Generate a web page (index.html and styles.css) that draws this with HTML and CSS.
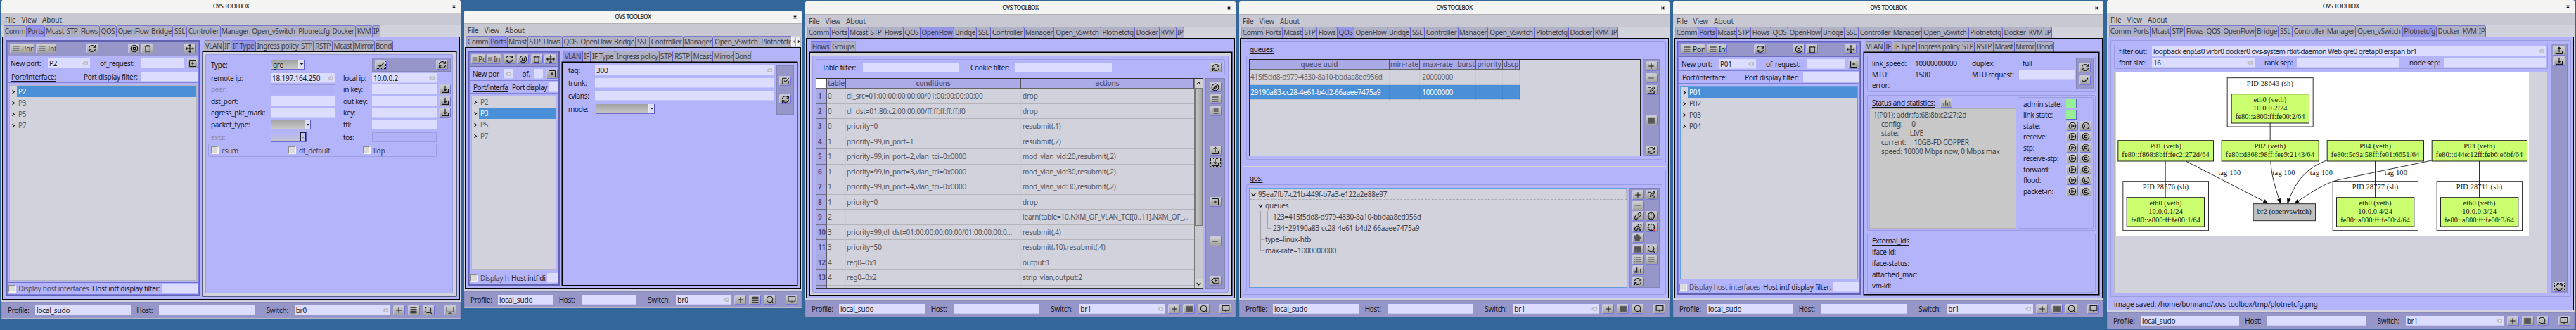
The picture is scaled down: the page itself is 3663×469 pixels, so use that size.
FILE: index.html
```html
<!DOCTYPE html>
<html lang="en">
<head>
<meta charset="utf-8">
<title>OVS TOOLBOX</title>
<link rel="stylesheet" href="styles.css">
</head>
<body>
<svg class="defs" aria-hidden="true">
  <symbol id="refresh" viewBox="0 0 16 16"><path d="M2 7A6 5.4 0 0 1 13 4.6M14 9A6 5.4 0 0 1 3 11.4M14 1.5V5.6H10M2 14.5V10.4H6"/></symbol>
  <symbol id="stop" viewBox="0 0 16 16"><circle cx="8" cy="8" r="6.3"/><rect x="5.9" y="5.9" width="4.2" height="4.2"/></symbol>
  <symbol id="play" viewBox="0 0 16 16"><circle cx="8" cy="8" r="6.3"/><path d="M6.5 5.3L10.7 8L6.5 10.7Z"/></symbol>
  <symbol id="trash" viewBox="0 0 16 16"><path d="M2 4H14M5.5 4V2H10.5V4M3.7 4V14.3H12.3V4"/></symbol>
  <symbol id="move" viewBox="0 0 16 16"><path d="M8 1V15M1 8H15M6 3L8 1L10 3M6 13L8 15L10 13M3 6L1 8L3 10M13 6L15 8L13 10"/></symbol>
  <symbol id="boxplus" viewBox="0 0 16 16"><rect x="2" y="2" width="12" height="12" rx="1"/><path d="M8 5V11M5 8H11"/></symbol>
  <symbol id="plus" viewBox="0 0 16 16"><path d="M8 3V13M3 8H13"/></symbol>
  <symbol id="minus" viewBox="0 0 16 16"><path d="M3 8H13"/></symbol>
  <symbol id="lines" viewBox="0 0 16 16"><path d="M2 4H14M2 8H14M2 12H14"/></symbol>
  <symbol id="lines4" viewBox="0 0 16 16"><path d="M2 3H14M2 6.4H14M2 9.7H14M2 13H14"/></symbol>
  <symbol id="solid" viewBox="0 0 16 16"><path d="M2 3H14V13.5H2Z" fill="#555" stroke="#666"/></symbol>
  <symbol id="list" viewBox="0 0 16 16"><path d="M5 4H14M5 8H14M5 12H14M1.5 4H3M1.5 8H3M1.5 12H3"/></symbol>
  <symbol id="search" viewBox="0 0 16 16"><circle cx="7.5" cy="7.2" r="5.6"/><path d="M11.5 11.2L14.5 14.5"/></symbol>
  <symbol id="screen" viewBox="0 0 16 16"><path d="M1.5 2H14.5V11H1.5ZM8 11V14M4.5 14H11.5"/></symbol>
  <symbol id="down" viewBox="0 0 16 16"><path d="M8 1V10M5 7.3L8 10.3L11 7.3M2 8V13.8H14V8"/></symbol>
  <symbol id="up" viewBox="0 0 16 16"><path d="M8 11V2M5 4.7L8 1.7L11 4.7M2 8V13.8H14V8"/></symbol>
  <symbol id="check" viewBox="0 0 16 16"><path d="M2.5 8.5L6 12L13.5 4"/></symbol>
  <symbol id="checkbox" viewBox="0 0 16 16"><path d="M13.5 8V14H2.5V3H10M5.5 7.5L8 10L14 2.5"/></symbol>
  <symbol id="edit" viewBox="0 0 16 16"><path d="M13.5 9V14.3H2V3H8M6 11L6.7 8L13 1.7L15 3.7L8.7 10.2Z"/></symbol>
  <symbol id="compass" viewBox="0 0 16 16"><circle cx="8" cy="8" r="6.5"/><path d="M11 5L9.5 9.2L5 11L6.6 6.7Z"/></symbol>
  <symbol id="erase" viewBox="0 0 16 16"><path d="M1 8L5.5 3H15V13H5.5ZM7.5 6L12 10M12 6L7.5 10"/></symbol>
  <symbol id="link" viewBox="0 0 16 16"><path d="M6.5 9.5A3 3 0 0 0 10.5 9.6L13.5 6.8A2.8 2.8 0 0 0 9.6 2.8L8 4.3M9.5 6.7A3 3 0 0 0 5.5 6.4L2.5 9.3A2.8 2.8 0 0 0 6.4 13.3L8 11.8"/></symbol>
  <symbol id="unlink" viewBox="0 0 16 16"><path d="M6.5 9.5A3 3 0 0 0 10.5 9.6L13.5 6.8A2.8 2.8 0 0 0 9.6 2.8L8 4.3M9.5 6.7A3 3 0 0 0 5.5 6.4L2.5 9.3A2.8 2.8 0 0 0 6.4 13.3L8 11.8M10.5 11L14.5 15M14.5 11L10.5 15"/></symbol>
  <symbol id="target" viewBox="0 0 16 16"><circle cx="8" cy="8" r="6.3"/><path d="M8 1.7V4.7M8 11.3V14.3M1.7 8H4.7M11.3 8H14.3"/></symbol>
  <symbol id="untarget" viewBox="0 0 16 16"><circle cx="8" cy="8" r="6.3"/><path d="M8 1.7V4.7M8 11.3V14.3M1.7 8H4.7M11.3 8H14.3"/><path d="M11 11L15 15M15 11L11 15" stroke="#e33"/></symbol>
  <symbol id="puzzle" viewBox="0 0 16 16"><path d="M2 4H6V2.5H8V4H11V7H14L13 10H11V13.5H3V10H1.5V7H3Z" fill="#555" stroke="#555"/></symbol>
  <symbol id="bars" viewBox="0 0 16 16"><path d="M2.8 13V9M6.3 13V3M9.8 13V8M13.2 13V5"/></symbol>
  <symbol id="clear" viewBox="0 0 16 12"><path d="M0 6L5 .5H16V11.5H5Z" fill="#bdbdc4" stroke="none"/><path d="M7 3.5L12 8.5M12 3.5L7 8.5" stroke="#eef" stroke-width="2"/></symbol>
  <symbol id="right" viewBox="0 0 8 8"><path d="M2 .8L6 4L2 7.2"/></symbol>
  <symbol id="open" viewBox="0 0 8 8"><path d="M.8 2.2L4 5.8L7.2 2.2"/></symbol>
  <symbol id="upc" viewBox="0 0 8 8"><path d="M.8 5.8L4 2.2L7.2 5.8"/></symbol>
  <symbol id="caret" viewBox="0 0 8 8"><path d="M1 2.5H7L4 6Z" fill="currentColor" stroke="none"/></symbol>
  <symbol id="close" viewBox="0 0 8 8"><path d="M1 1L7 7M7 1L1 7" stroke-width="2"/></symbol>
</svg>

<!-- Ports: tunnel interface -->
<section class="win w1">
  <header class="title">OVS TOOLBOX<svg><use href="#close"/></svg></header>
  <nav class="menu"><span>File</span><span>View</span><span>About</span></nav>
  <nav class="tabs main"><i>Comm</i><i class="on">Ports</i><i>Mcast</i><i>STP</i><i>Flows</i><i>QOS</i><i>OpenFlow</i><i>Bridge</i><i>SSL</i><i>Controller</i><i>Manager</i><i>Open_vSwitch</i><i>Plotnetcfg</i><i>Docker</i><i>KVM</i><i>IP</i></nav>
  <main class="frame split">
    <div class="ports">
      <div class="bar"><b class="btn port dim"><svg><use href="#lines"/></svg>Port</b><b class="btn int dim"><svg><use href="#lines"/></svg>Int</b><s></s><b class="btn"><svg><use href="#refresh"/></svg></b><s></s><b class="btn"><svg><use href="#stop"/></svg></b><b class="btn dim"><svg><use href="#trash"/></svg></b><s></s><b class="btn"><svg><use href="#move"/></svg></b></div>
      <div class="newport"><label>New port:</label><div class="in">P2<svg><use href="#clear"/></svg></div><label class="req">of_request:</label><div class="in"></div><b class="btn"><svg><use href="#boxplus"/></svg></b></div>
      <div class="filter"><label class="u">Port/interface:</label><label>Port display filter:</label><div class="in"></div></div>
      <div class="list"><p><svg><use href="#right"/></svg><span class="sel">P2</span></p><p><svg><use href="#right"/></svg><span>P3</span></p><p><svg><use href="#right"/></svg><span>P5</span></p><p><svg><use href="#right"/></svg><span>P7</span></p></div>
      <div class="foot"><em class="cb"></em><label class="soft">Display host interfaces</label><label>Host intf display filter:</label><div class="in"></div></div>
    </div>
    <div class="book">
      <nav class="tabs sub"><i>VLAN</i><i>IF</i><i class="on">IF Type</i><i>Ingress policy</i><i>STP</i><i>RSTP</i><i>Mcast</i><i>Mirror</i><i>Bond</i></nav>
      <div class="page gray"><div class="box iftype">
        <label>Type:</label><div class="combo c47">gre<q><svg><use href="#caret"/></svg></q></div><div class="bar apply"><b class="btn focus"><svg><use href="#check"/></svg></b><b class="btn"><svg><use href="#refresh"/></svg></b></div>
        <label>remote ip:</label><div class="in">18.197.164.250<svg><use href="#clear"/></svg></div><label class="l2">local ip:</label><div class="in">10.0.0.2<svg><use href="#clear"/></svg></div><span></span>
        <label class="off">peer:</label><div class="in off"></div><label class="l2">in key:</label><div class="in"></div><b class="btn"><svg><use href="#down"/></svg></b>
        <label>dst_port:</label><div class="in"></div><label class="l2">out key:</label><div class="in"></div><b class="btn"><svg><use href="#down"/></svg></b>
        <label>egress_pkt_mark:</label><div class="in"></div><label class="l2">key:</label><div class="in"></div><b class="btn"><svg><use href="#down"/></svg></b>
        <label>packet_type:</label><div class="combo c56"><span></span><q><svg><use href="#caret"/></svg></q></div><label class="l2">ttl:</label><div class="in"></div><span></span>
        <label class="off">exts:</label><div class="combo c50 faint"><span></span><q><svg><use href="#caret"/></svg></q></div><label class="l2">tos:</label><div class="in off"></div><span></span>
        <div class="checks"><em class="cb"></em><label>csum</label><em class="cb"></em><label>df_default</label><em class="cb"></em><label>lldp</label></div>
      </div></div>
    </div>
  </main>
  <footer class="status"><label>Profile:</label><div class="in">local_sudo</div><label class="host">Host:</label><div class="in"></div><label class="switch">Switch:</label><div class="in">br0<svg><use href="#clear"/></svg></div><b class="btn"><svg><use href="#plus"/></svg></b><b class="btn"><svg><use href="#lines4"/></svg></b><b class="btn"><svg><use href="#search"/></svg></b><b class="btn dim"><svg><use href="#screen"/></svg></b></footer>
</section>

<!-- Ports: VLAN, small window -->
<section class="win w2">
  <header class="title">OVS TOOLBOX<svg><use href="#close"/></svg></header>
  <nav class="menu"><span>File</span><span>View</span><span>About</span></nav>
  <div class="tabwrap"><nav class="tabs main"><i>Comm</i><i class="on">Ports</i><i>Mcast</i><i>STP</i><i>Flows</i><i>QOS</i><i>OpenFlow</i><i>Bridge</i><i>SSL</i><i>Controller</i><i>Manager</i><i>Open_vSwitch</i><i>Plotnetcfg</i></nav><div class="arrows"><q class="l"><svg><use href="#caret"/></svg></q><q class="r"><svg><use href="#caret"/></svg></q></div></div>
  <main class="frame split">
    <div class="ports">
      <div class="bar"><b class="btn port dim"><svg><use href="#lines"/></svg>Po</b><b class="btn int dim"><svg><use href="#lines"/></svg>In</b><s></s><b class="btn"><svg><use href="#refresh"/></svg></b><s></s><b class="btn"><svg><use href="#stop"/></svg></b><s></s><b class="btn"><svg><use href="#trash"/></svg></b><s></s><b class="btn"><svg><use href="#move"/></svg></b></div>
      <div class="newport"><label>New por</label><div class="in"><svg><use href="#clear"/></svg></div><label class="req">of.</label><div class="in"></div><b class="btn"><svg><use href="#boxplus"/></svg></b></div>
      <div class="filter"><label class="u">Port/interfa</label><label>Port display</label><div class="in"></div></div>
      <div class="list"><p><svg><use href="#right"/></svg><span>P2</span></p><p><svg><use href="#right"/></svg><span class="sel">P3</span></p><p><svg><use href="#right"/></svg><span>P5</span></p><p><svg><use href="#right"/></svg><span>P7</span></p></div>
      <div class="foot"><em class="cb"></em><label class="soft">Display h</label><label>Host intf di</label><div class="in"></div></div>
    </div>
    <div class="book">
      <nav class="tabs sub"><i class="on">VLAN</i><i>IF</i><i>IF Type</i><i>Ingress policy</i><i>STP</i><i>RSTP</i><i>Mcast</i><i>Mirror</i><i>Bond</i></nav>
      <div class="page vlan">
        <div class="vform"><label>tag:</label><div class="in">300<svg><use href="#clear"/></svg></div><label>trunk:</label><div class="in"></div><label>cvlans:</label><div class="in"></div><label>mode:</label><div class="combo c84"><span></span><q><svg><use href="#caret"/></svg></q></div></div>
        <div class="bar side"><b class="btn"><svg><use href="#checkbox"/></svg></b><b class="btn"><svg><use href="#refresh"/></svg></b></div>
      </div>
    </div>
  </main>
  <footer class="status"><label>Profile:</label><div class="in">local_sudo</div><label class="host">Host:</label><div class="in"></div><label class="switch">Switch:</label><div class="in">br0<svg><use href="#clear"/></svg></div><b class="btn"><svg><use href="#plus"/></svg></b><b class="btn"><svg><use href="#lines4"/></svg></b><b class="btn"><svg><use href="#search"/></svg></b><b class="btn dim"><svg><use href="#screen"/></svg></b></footer>
</section>

<!-- OpenFlow flows -->
<section class="win w3">
  <header class="title">OVS TOOLBOX<svg><use href="#close"/></svg></header>
  <nav class="menu"><span>File</span><span>View</span><span>About</span></nav>
  <nav class="tabs main"><i>Comm</i><i>Ports</i><i>Mcast</i><i>STP</i><i>Flows</i><i>QOS</i><i class="on">OpenFlow</i><i>Bridge</i><i>SSL</i><i>Controller</i><i>Manager</i><i>Open_vSwitch</i><i>Plotnetcfg</i><i>Docker</i><i>KVM</i><i>IP</i></nav>
  <main class="frame flowsframe">
    <nav class="tabs of"><i class="on">Flows</i><i>Groups</i></nav>
    <div class="page gray"><div class="box flows">
      <div class="box offilter"><label>Table filter:</label><div class="in"></div><label class="cookie">Cookie filter:</label><div class="in"></div><b class="btn"><svg><use href="#refresh"/></svg></b></div>
      <div class="flowbody">
        <div class="tablewrap">
          <div class="ftable">
            <div class="fr hd"><span class="corner"></span><span>table</span><span>conditions</span><span>actions</span></div>
            <div class="fr"><span>1</span><span>0</span><span>dl_src=01:00:00:00:00:00/01:00:00:00:00:00</span><span>drop</span></div>
            <div class="fr"><span>2</span><span>0</span><span>dl_dst=01:80:c2:00:00:00/ff:ff:ff:ff:ff:f0</span><span>drop</span></div>
            <div class="fr"><span>3</span><span>0</span><span>priority=0</span><span>resubmit(,1)</span></div>
            <div class="fr"><span>4</span><span>1</span><span>priority=99,in_port=1</span><span>resubmit(,2)</span></div>
            <div class="fr"><span>5</span><span>1</span><span>priority=99,in_port=2,vlan_tci=0x0000</span><span>mod_vlan_vid:20,resubmit(,2)</span></div>
            <div class="fr"><span>6</span><span>1</span><span>priority=99,in_port=3,vlan_tci=0x0000</span><span>mod_vlan_vid:30,resubmit(,2)</span></div>
            <div class="fr"><span>7</span><span>1</span><span>priority=99,in_port=4,vlan_tci=0x0000</span><span>mod_vlan_vid:30,resubmit(,2)</span></div>
            <div class="fr"><span>8</span><span>1</span><span>priority=0</span><span>drop</span></div>
            <div class="fr"><span>9</span><span>2</span><span></span><span>learn(table=10,NXM_OF_VLAN_TCI[0..11],NXM_OF_...</span></div>
            <div class="fr"><span>10</span><span>3</span><span>priority=99,dl_dst=01:00:00:00:00:00/01:00:00:00:0...</span><span>resubmit(,4)</span></div>
            <div class="fr"><span>11</span><span>3</span><span>priority=50</span><span>resubmit(,10),resubmit(,4)</span></div>
            <div class="fr"><span>12</span><span>4</span><span>reg0=0x1</span><span>output:1</span></div>
            <div class="fr"><span>13</span><span>4</span><span>reg0=0x2</span><span>strip_vlan,output:2</span></div>
            <div class="fr"><span></span><span></span><span></span><span></span></div>
          </div>
          <div class="scroll"><q><svg><use href="#upc"/></svg></q><div class="thumb"></div><q class="end"><svg><use href="#open"/></svg></q></div>
        </div>
        <div class="bar tools3"><b class="btn"><svg><use href="#compass"/></svg></b><b class="btn"><svg><use href="#lines"/></svg></b><b class="btn"><svg><use href="#list"/></svg></b><b class="btn g1"><svg><use href="#up"/></svg></b><b class="btn focus"><svg><use href="#down"/></svg></b><b class="btn g1"><svg><use href="#boxplus"/></svg></b><b class="btn g1"><svg><use href="#minus"/></svg></b><b class="btn g1"><svg><use href="#erase"/></svg></b></div>
      </div>
    </div></div>
  </main>
  <footer class="status"><label>Profile:</label><div class="in">local_sudo</div><label class="host">Host:</label><div class="in"></div><label class="switch">Switch:</label><div class="in">br1<svg><use href="#clear"/></svg></div><b class="btn"><svg><use href="#plus"/></svg></b><b class="btn"><svg><use href="#solid"/></svg></b><b class="btn"><svg><use href="#search"/></svg></b><b class="btn"><svg><use href="#screen"/></svg></b></footer>
</section>

<!-- QOS -->
<section class="win w4">
  <header class="title">OVS TOOLBOX<svg><use href="#close"/></svg></header>
  <nav class="menu"><span>File</span><span>View</span><span>About</span></nav>
  <nav class="tabs main"><i>Comm</i><i>Ports</i><i>Mcast</i><i>STP</i><i>Flows</i><i class="on">QOS</i><i>OpenFlow</i><i>Bridge</i><i>SSL</i><i>Controller</i><i>Manager</i><i>Open_vSwitch</i><i>Plotnetcfg</i><i>Docker</i><i>KVM</i><i>IP</i></nav>
  <main class="frame qosframe">
    <div class="box queues"><h4>queues:</h4><div class="box qin">
      <div class="qtable">
        <div class="qr hd"><span>queue uuid</span><span>min-rate</span><span>max-rate</span><span>burst</span><span>priority</span><span>dscp</span></div>
        <div class="qr"><span>415f5dd8-d979-4330-8a10-bbdaa8ed956d</span><span></span><span>20000000</span><span></span><span></span><span></span></div>
        <div class="qr selrow"><span>29190a83-cc28-4e61-b4d2-66aaee7475a9</span><span></span><span>10000000</span><span></span><span></span><span></span></div>
      </div>
      <div class="bar tools4"><b class="btn"><svg><use href="#plus"/></svg></b><b class="btn dim"><svg><use href="#minus"/></svg></b><b class="btn"><svg><use href="#edit"/></svg></b><b class="btn far"><svg><use href="#solid"/></svg></b><b class="btn far"><svg><use href="#refresh"/></svg></b></div>
    </div></div>
    <div class="rule"></div>
    <div class="box qos"><h4>qos:</h4><div class="box qin">
      <div class="tree">
        <p class="cur"><svg><use href="#open"/></svg>95ea7fb7-c21b-449f-b7a3-e122a2e88e97</p>
        <p class="t1"><svg><use href="#open"/></svg>queues</p>
        <div class="kids"><p class="t2">123=415f5dd8-d979-4330-8a10-bbdaa8ed956d</p><p class="t2 last">234=29190a83-cc28-4e61-b4d2-66aaee7475a9</p><p class="t3">type=linux-htb</p></div>
        <p class="t3 last">max-rate=1000000000</p>
      </div>
      <div class="bar tools5"><b class="btn"><svg><use href="#plus"/></svg></b><b class="btn"><svg><use href="#edit"/></svg></b><b class="btn dim"><svg><use href="#minus"/></svg></b><span></span><b class="btn"><svg><use href="#link"/></svg></b><b class="btn"><svg><use href="#target"/></svg></b><b class="btn"><svg><use href="#unlink"/></svg></b><b class="btn"><svg><use href="#untarget"/></svg></b><b class="btn"><svg><use href="#puzzle"/></svg></b><span></span><b class="btn"><svg><use href="#solid"/></svg></b><b class="btn"><svg><use href="#search"/></svg></b><b class="btn dim"><svg><use href="#list"/></svg></b><b class="btn dim"><svg><use href="#lines"/></svg></b><b class="btn"><svg><use href="#bars"/></svg></b><span></span><b class="btn"><svg><use href="#refresh"/></svg></b></div>
    </div></div>
  </main>
  <footer class="status"><label>Profile:</label><div class="in">local_sudo</div><label class="host">Host:</label><div class="in"></div><label class="switch">Switch:</label><div class="in">br1<svg><use href="#clear"/></svg></div><b class="btn"><svg><use href="#plus"/></svg></b><b class="btn"><svg><use href="#solid"/></svg></b><b class="btn"><svg><use href="#search"/></svg></b><b class="btn"><svg><use href="#screen"/></svg></b></footer>
</section>

<!-- Ports: interface status -->
<section class="win w5">
  <header class="title">OVS TOOLBOX<svg><use href="#close"/></svg></header>
  <nav class="menu"><span>File</span><span>View</span><span>About</span></nav>
  <nav class="tabs main"><i>Comm</i><i class="on">Ports</i><i>Mcast</i><i>STP</i><i>Flows</i><i>QOS</i><i>OpenFlow</i><i>Bridge</i><i>SSL</i><i>Controller</i><i>Manager</i><i>Open_vSwitch</i><i>Plotnetcfg</i><i>Docker</i><i>KVM</i><i>IP</i></nav>
  <main class="frame split">
    <div class="ports">
      <div class="bar"><b class="btn port"><svg><use href="#lines"/></svg>Port</b><b class="btn int"><svg><use href="#lines"/></svg>Int</b><s></s><b class="btn"><svg><use href="#refresh"/></svg></b><s></s><b class="btn"><svg><use href="#stop"/></svg></b><b class="btn"><svg><use href="#trash"/></svg></b><s></s><b class="btn"><svg><use href="#move"/></svg></b></div>
      <div class="newport"><label>New port:</label><div class="in">P01<svg><use href="#clear"/></svg></div><label class="req">of_request:</label><div class="in"></div><b class="btn"><svg><use href="#boxplus"/></svg></b></div>
      <div class="filter"><label class="u">Port/interface:</label><label>Port display filter:</label><div class="in"></div></div>
      <div class="list focused"><p><svg><use href="#right"/></svg><span class="sel">P01</span></p><p><svg><use href="#right"/></svg><span>P02</span></p><p><svg><use href="#right"/></svg><span>P03</span></p><p><svg><use href="#right"/></svg><span>P04</span></p></div>
      <div class="foot"><em class="cb"></em><label class="soft">Display host interfaces</label><label>Host intf display filter:</label><div class="in"></div></div>
    </div>
    <div class="book">
      <nav class="tabs sub"><i>VLAN</i><i class="on">IF</i><i>IF Type</i><i>Ingress policy</i><i>STP</i><i>RSTP</i><i>Mcast</i><i>Mirror</i><i>Bond</i></nav>
      <div class="page ifpage">
        <div class="box speed">
          <div class="sgrid"><label>link_speed:</label><label>10000000000</label><label>duplex:</label><label class="full">full</label><label>MTU:</label><label>1500</label><label>MTU request:</label><div class="in"></div><label>error:</label></div>
          <div class="bar side"><b class="btn"><svg><use href="#refresh"/></svg></b><b class="btn"><svg><use href="#check"/></svg></b></div>
        </div>
        <div class="box stats">
          <div class="statcol"><div class="stathead"><h4>Status and statistics:</h4><b class="btn dim"><svg><use href="#bars"/></svg></b></div>
<pre class="report">1(P01): addr:fa:68:8b:c2:27:2d
<span class="k">config:</span><span class="v1">0</span>
<span class="k">state:</span><span class="v2">LIVE</span>
<span class="k">current:</span><span class="v3">10GB-FD COPPER</span>
<span class="k">speed: 10000 Mbps now, 0 Mbps max</span></pre></div>
          <div class="box states">
            <label>admin state:</label><em class="led"></em><span></span>
            <label>link state:</label><em class="led"></em><span></span>
            <label>state:</label><b class="btn"><svg><use href="#play"/></svg></b><b class="btn"><svg><use href="#stop"/></svg></b>
            <label>receive:</label><b class="btn"><svg><use href="#play"/></svg></b><b class="btn"><svg><use href="#stop"/></svg></b>
            <label>stp:</label><b class="btn"><svg><use href="#play"/></svg></b><b class="btn"><svg><use href="#stop"/></svg></b>
            <label>receive-stp:</label><b class="btn"><svg><use href="#play"/></svg></b><b class="btn"><svg><use href="#stop"/></svg></b>
            <label>forward:</label><b class="btn"><svg><use href="#play"/></svg></b><b class="btn"><svg><use href="#stop"/></svg></b>
            <label>flood:</label><b class="btn"><svg><use href="#play"/></svg></b><b class="btn"><svg><use href="#stop"/></svg></b>
            <label>packet-in:</label><b class="btn"><svg><use href="#play"/></svg></b><b class="btn"><svg><use href="#stop"/></svg></b>
          </div>
        </div>
        <div class="box ids"><label class="u">External_ids</label><label>iface-id:</label><label>iface-status:</label><label>attached_mac:</label><label>vm-id:</label></div>
      </div>
    </div>
  </main>
  <footer class="status"><label>Profile:</label><div class="in">local_sudo</div><label class="host">Host:</label><div class="in"></div><label class="switch">Switch:</label><div class="in">br1<svg><use href="#clear"/></svg></div><b class="btn"><svg><use href="#plus"/></svg></b><b class="btn"><svg><use href="#solid"/></svg></b><b class="btn"><svg><use href="#search"/></svg></b><b class="btn"><svg><use href="#screen"/></svg></b></footer>
</section>

<!-- Plotnetcfg -->
<section class="win w6">
  <header class="title">OVS TOOLBOX<svg><use href="#close"/></svg></header>
  <nav class="menu"><span>File</span><span>View</span><span>About</span></nav>
  <nav class="tabs main"><i>Comm</i><i>Ports</i><i>Mcast</i><i>STP</i><i>Flows</i><i>QOS</i><i>OpenFlow</i><i>Bridge</i><i>SSL</i><i>Controller</i><i>Manager</i><i>Open_vSwitch</i><i class="on">Plotnetcfg</i><i>Docker</i><i>KVM</i><i>IP</i></nav>
  <main class="frame plotframe">
    <div class="box plot">
      <div class="plotcol">
        <div class="box pfilter">
          <div><label>filter out:</label><div class="in">loopback enp5s0 virbr0 docker0 ovs-system rtkit-daemon Web gre0 gretap0 erspan br1<svg><use href="#clear"/></svg></div></div>
          <div><label>font size:</label><div class="in">16<svg><use href="#clear"/></svg></div><label class="rank">rank sep:</label><div class="in"></div><label class="node">node sep:</label><div class="in"></div></div>
        </div>
        <div class="canvas">
          <svg class="graph" viewBox="58 308 1760 696">
            <g class="cluster"><rect x="532" y="331" width="366" height="208"/><rect x="87" y="772" width="365" height="210"/><rect x="982" y="772" width="364" height="210"/><rect x="1426" y="772" width="364" height="210"/></g>
            <g class="veth"><rect x="550" y="400" width="331" height="124"/><rect x="66" y="598" width="407" height="88"/><rect x="508" y="598" width="414" height="88"/><rect x="958" y="598" width="412" height="88"/><rect x="1405" y="598" width="406" height="88"/><rect x="103" y="841" width="331" height="124"/><rect x="998" y="841" width="331" height="124"/><rect x="1442" y="841" width="331" height="124"/></g>
            <rect class="bridge" x="643" y="868" width="265" height="72"/>
            <path class="edge" d="M715 524V598M268 686V841M1163 686V841M1607 686V841M355 686L690 858M717 686C720 750 738 800 753 850M958 682C870 715 825 770 796 850M1404 683L1010 765C960 775 900 812 832 858"/>
            <path class="tip" d="M706 867L685 862L692 850ZM760 867L746 850L759 846ZM789 867L788 846L802 850ZM820 867L830 850L838 861Z"/>
            <g class="gt">
              <text x="714" y="364" textLength="198">PID 28643 (sh)</text><text x="714" y="433" textLength="140">eth0 (veth)</text><text x="715" y="469" textLength="146">10.0.0.2/24</text><text x="715" y="505" textLength="296">fe80::a800:ff:fe00:2/64</text>
              <text x="269" y="631" textLength="134">P01 (veth)</text><text x="269" y="667" textLength="373">fe80::f868:8bff:fec2:272d/64</text>
              <text x="714" y="631" textLength="134">P02 (veth)</text><text x="714" y="667" textLength="378">fe80::d868:98ff:fee9:2143/64</text>
              <text x="1163" y="631" textLength="134">P04 (veth)</text><text x="1163" y="667" textLength="376">fe80::5c9a:58ff:fe01:6651/64</text>
              <text x="1607" y="631" textLength="134">P03 (veth)</text><text x="1607" y="667" textLength="370">fe80::d44e:12ff:feb6:e6bf/64</text>
              <text x="541" y="746" textLength="96">tag 100</text><text x="773" y="746" textLength="96">tag 100</text><text x="933" y="746" textLength="96">tag 100</text><text x="1251" y="746" textLength="96">tag 100</text>
              <text x="269" y="806" textLength="196">PID 28576 (sh)</text><text x="269" y="874" textLength="138">eth0 (veth)</text><text x="269" y="910" textLength="146">10.0.0.1/24</text><text x="269" y="946" textLength="296">fe80::a800:ff:fe00:1/64</text>
              <text x="1163" y="806" textLength="196">PID 28777 (sh)</text><text x="1163" y="874" textLength="138">eth0 (veth)</text><text x="1163" y="910" textLength="146">10.0.0.4/24</text><text x="1163" y="946" textLength="296">fe80::a800:ff:fe00:4/64</text>
              <text x="1607" y="806" textLength="196">PID 28711 (sh)</text><text x="1607" y="874" textLength="138">eth0 (veth)</text><text x="1607" y="910" textLength="146">10.0.0.3/24</text><text x="1607" y="946" textLength="296">fe80::a800:ff:fe00:3/64</text>
              <text x="775" y="910" textLength="231">br2 (openvswitch)</text>
            </g>
          </svg>
        </div>
      </div>
      <div class="bar tools6"><b class="btn"><svg><use href="#up"/></svg></b><b class="btn"><svg><use href="#down"/></svg></b><b class="btn focus low"><svg><use href="#refresh"/></svg></b></div>
    </div>
    <p class="saved">image saved: /home/bonnand/.ovs-toolbox/tmp/plotnetcfg.png</p>
  </main>
  <footer class="status"><label>Profile:</label><div class="in">local_sudo</div><label class="host">Host:</label><div class="in"></div><label class="switch">Switch:</label><div class="in">br1<svg><use href="#clear"/></svg></div><b class="btn"><svg><use href="#plus"/></svg></b><b class="btn"><svg><use href="#solid"/></svg></b><b class="btn"><svg><use href="#search"/></svg></b><b class="btn"><svg><use href="#screen"/></svg></b></footer>
</section>
</body>
</html>
```
FILE: styles.css
```css
* { box-sizing: border-box; }
html, body { margin: 0; width: 3663px; height: 469px; overflow: hidden; background: #336699; }
body { position: relative; font: 10px/14px "Noto Sans", "Open Sans", sans-serif; letter-spacing: -.3px; color: #17171c; white-space: nowrap; }
.defs { position: absolute; width: 0; height: 0; }
svg { fill: none; stroke: currentColor; stroke-width: 1.5; flex: none; }
p, h4, pre { margin: 0; }
i, em, b { font-style: normal; font-weight: normal; }
q { quotes: none; }
q::before, q::after { content: none; }
h4 { font-weight: normal; font-size: 10px; line-height: 14px; text-decoration: underline; text-underline-offset: 2px; }
.u { text-decoration: underline; text-underline-offset: 2px; }

/* windows on the desktop */
.win { position: absolute; display: flex; flex-direction: column; background: #d2d2dc; border-radius: 3px 3px 0 0; overflow: hidden; }
.w1 { left: 2px; top: 0; width: 653px; height: 453px; }
.w2 { left: 660px; top: 15px; width: 480px; height: 423px; }
.w3 { left: 1145px; top: 2px; width: 612px; height: 449px; }
.w4 { left: 1762px; top: 2px; width: 612px; height: 449px; }
.w5 { left: 2379px; top: 2px; width: 612px; height: 449px; }
.w6 { left: 2996px; top: 0; width: 665px; height: 468px; }

.title { height: 19px; flex: none; display: flex; align-items: center; justify-content: center; background: #f4f4f3; border-bottom: 1px solid #b2b2b6; font-size: 8px; line-height: 18px; position: relative; -webkit-text-stroke: .2px; }
.title svg { position: absolute; right: 7px; top: 7px; width: 5px; height: 5px; }
.menu { height: 17px; flex: none; display: flex; align-items: center; background: #c8c8d2; padding-left: 5px; color: #3c3c42; }
.menu span { margin-right: 8px; letter-spacing: -.1px; }

/* tab rows */
.tabs { display: flex; height: 16px; flex: none; }
.tabs i { flex: none; display: flex; justify-content: center; height: 16px; line-height: 15px; background: #b1b1c6; border-right: 1px solid #6464d2; border-top: 1px solid #7878c8; color: #3e3e48; letter-spacing: -.38px; }
.tabs i.on { background: #9696e6; border-top-color: #7878e6; }
.main { padding-left: 3px; }
.main i { border-radius: 0 3px 0 0; }
.main i:first-child { border-left: 1px solid #9a9ad6; width: 33px; }
.main i:nth-child(2) { width: 26px; }
.main i:nth-child(3), .main i:nth-child(5) { width: 29px; }
.main i:nth-child(4), .main i:nth-child(9) { width: 20px; }
.main i:nth-child(6) { width: 24px; }
.main i:nth-child(7), .main i:nth-child(10), .main i:nth-child(13) { width: 48px; }
.main i:nth-child(8) { width: 32px; }
.main i:nth-child(11) { width: 42px; }
.main i:nth-child(12) { width: 67px; }
.main i:nth-child(14) { width: 35px; }
.main i:nth-child(15) { width: 24px; letter-spacing: -.6px; }
.main i:nth-child(16) { width: 11px; }
.sub { padding-left: 2px; }
.sub i { border-color: #8484b4; border-right-color: #5c5cc8; border-radius: 3px 3px 0 0; letter-spacing: -.42px; }
.sub i:nth-child(1) { width: 28px; }
.sub i:nth-child(2) { width: 11px; }
.sub i:nth-child(3) { width: 35px; }
.sub i:nth-child(4) { width: 63px; }
.sub i:nth-child(5) { width: 19px; }
.sub i:nth-child(6) { width: 27px; }
.sub i:nth-child(7), .sub i:nth-child(8) { width: 30px; }
.sub i:nth-child(9) { width: 26px; }
.tabwrap { display: flex; }
.tabwrap .tabs { width: 465px; overflow: hidden; }
.arrows { display: flex; height: 15px; padding-top: 1px; }
.arrows q { width: 7px; background: #ededf0; border: 1px solid #b4b4c0; border-left-color: #fff; display: flex; align-items: center; justify-content: center; }
.arrows svg { width: 6px; height: 6px; transform: rotate(-90deg); }
.arrows .l { color: #888; }
.arrows .l svg { transform: rotate(90deg); }

/* shared widgets */
.frame { flex: 1; min-height: 0; margin: 0 1px 3px; border: 1px solid #000; background: #b4b4fa; }
.w3 .frame, .w4 .frame, .w5 .frame { border-left-width: 2px; }
.box { border: 1px solid #9c9ce0; border-radius: 2px; }
.bar { background: #9696c8; border: 1px solid #8484b6; }
.in { height: 14px; background: #dcdcff; padding: 0 2px; line-height: 14px; position: relative; overflow: hidden; border-bottom: 1px solid #c8c8f4; color: #222228; letter-spacing: -.2px; }
.in svg { position: absolute; right: 3px; top: 4px; width: 8px; height: 6px; }
.in.off { background: #b1b1f6; border: 1px solid #9c9ce0; }
.btn { width: 17px; height: 14px; flex: none; display: flex; align-items: center; justify-content: center; background: linear-gradient(#d0d0d0, #a2a2a2); border: 1px solid #c4c4e6; border-right-color: #6e6ee0; border-bottom-color: #7878dc; border-radius: 2px; overflow: hidden; }
.btn svg { width: 12px; height: 12px; }
.dim { color: #44444a; }
.focus { outline: 1px dotted #111; outline-offset: -2px; }
.port, .int { justify-content: flex-start; padding-left: 2px; gap: 2px; width: 35px; letter-spacing: -.1px; }
.int { width: 29px; }
.cb { display: block; width: 11px; height: 11px; background: #dadada; border: 1px solid #8c8c90; border-right: 2px solid #f2f2e8; border-bottom: 2px solid #f2f2e8; flex: none; }
.soft { color: #4b4b62; }
label.off { color: #8c8ca8; }
.combo { height: 14px; display: flex; justify-content: space-between; background: linear-gradient(#a2a2a2, #c8c8c8); border-right: 1px solid #5a5ac8; border-bottom: 1px solid #6e6ec8; padding-left: 2px; margin-left: 1px; }
.combo q { width: 8px; background: #dcdcf5; border-left: 1px solid #eee; display: flex; align-items: center; justify-content: center; }
.combo svg { width: 6px; height: 6px; }
.c47 { width: 47px; } .c56 { width: 56px; } .c50 { width: 50px; } .c84 { width: 84px; }
.faint { background: linear-gradient(#b4b4fa, #c4c4d0); }
.faint q { border: 1px solid #222; color: #777; background: #c4c4ee; }

/* status bar */
.status { height: 24px; flex: none; display: flex; align-items: center; background: #9696c8; border: 1px solid #8a8abc; border-bottom-color: #b8b8cc; padding: 0 5px 1px 8px; }
.status label { width: 39px; flex: none; }
.status .host { width: 40px; padding-left: 8px; }
.status .switch { width: 56px; padding-left: 16px; }
.status .in { flex: 1; min-width: 0; }
.status .btn { margin-left: 4px; }
.status .btn:last-child { margin-left: 14px; }

/* ports side panel */
.split { display: flex; }
.ports { flex: none; margin: 4px 3px 4px 4px; border: 2px solid #6262b2; outline: 1px solid #7b7be2; outline-offset: -3px; padding: 1px; display: flex; flex-direction: column; overflow: hidden; }
.w1 .ports { width: 277px; margin-left: 4px; }
.w2 .ports { width: 131px; margin-left: 3px; }
.w5 .ports { width: 263px; margin-left: 2px; margin-top: 3px; }
.ports > .bar { height: 20px; flex: none; display: flex; align-items: center; padding: 0 4px 2px 3px; gap: 2px; border: 0; border-bottom: 1px solid #6e6ebe; }
.ports s { flex: 1; margin: 0 -1px; }
.w2 .ports > .bar { padding: 0 2px 2px 2px; gap: 1px; }
.w2 .port, .w2 .int { width: 21px; gap: 1px; padding-left: 0; }
.w2 .port svg, .w2 .int svg { width: 8px; }
.newport { height: 20px; flex: none; display: flex; align-items: center; border-bottom: 1px solid #8080d8; }
.newport label { width: 57px; padding-left: 4px; flex: none; overflow: hidden; }
.newport .in { flex: 1; }
.newport .req { width: 73px; padding-left: 14px; }
.newport .btn { width: 16px; margin-left: 5px; }
.w2 .newport label { width: 48px; }
.w2 .newport .req { width: 29px; padding-left: 13px; }
.filter { height: 18px; flex: none; display: flex; align-items: center; border-bottom: 1px solid #8080d8; padding-left: 5px; }
.filter label { width: 103px; flex: none; overflow: hidden; }
.filter label + label { width: 82px; }
.filter .in { flex: 1; }
.w2 .filter label { width: 49px; margin-right: 6px; letter-spacing: -.45px; }
.w2 .filter label + label { width: 51px; margin-right: 1px; }
.w5 .filter label { width: 89px; }
.w5 .filter label + label { width: 83px; }
.list { flex: 1; margin: 3px 2px 2px; background: #d2d2dc; border: 1px solid #b4b4bc; color: #606068; }
.list.focused { border-color: #62a0dc; color: #42424a; }
.list p { height: 16px; display: flex; align-items: center; }
.list svg { width: 6px; height: 7px; margin: 0 2px; color: #111; }
.list span { flex: 1; height: 16px; line-height: 16px; padding-left: 2px; }
.list .sel { background: #4a90d9; color: #fff; }
.foot { height: 17px; flex: none; display: flex; align-items: center; border-top: 1px solid #7070cc; padding-left: 1px; overflow: hidden; }
.foot label { width: 104px; margin-left: 3px; flex: none; overflow: hidden; letter-spacing: -.25px; }
.foot label + label { width: 99px; margin: 0 0 0 1px; }
.foot .in { flex: 1; }
.w2 .foot label { width: 41px; }
.w2 .foot label + label { width: 50px; margin: 0 1px 0 3px; }

/* notebook at the right */
.book { flex: 1; min-width: 0; margin: 4px 4px 4px 0; display: flex; flex-direction: column; }
.w5 .book { margin-top: 3px; }
.page { flex: 1; min-height: 0; border: 1px solid #000; box-shadow: 0 0 0 .5px #000; }
.gray { background: #d2d2dc; padding: 3px 4px 3px 3px; display: flex; }
.gray > .box { flex: 1; background: #b4b4fa; }
.iftype { display: grid; grid-template-columns: 85px 92px 52px 92px 20px; grid-template-rows: 21px 17px 16px 17px 16px 18px 18px 19px; padding: 3px 2px 0 7px; align-items: center; align-content: start; }
.iftype .l2 { padding-left: 11px; }
.iftype .btn { margin-left: 3px; }
.apply { grid-column: 4 / 6; width: 112px; height: 20px; display: flex; align-items: center; justify-content: space-between; padding: 0 3px 0 0; }
.iftype .c47 { grid-column: 2 / 4; }
.checks { grid-column: 1 / 5; height: 19px; margin-left: -4px; border: 1px solid #9c9ce0; border-radius: 2px; display: grid; grid-template-columns: 15px 95px 15px 91px 15px 1fr; align-items: center; padding-left: 3px; color: #3e3e50; }
.vlan { display: flex; }
.vform { flex: 1; display: grid; grid-template-columns: 38px 1fr; grid-auto-rows: 18.2px; align-items: center; align-content: start; padding: 2px 3px 0 8px; }
.vlan .side { width: 25px; height: 70px; margin: 4px 4px 0 0; }
.side { display: flex; flex-direction: column; align-items: center; justify-content: center; gap: 12px; }

/* OpenFlow page */
.flowsframe { display: flex; flex-direction: column; padding: 3px; }
.flowsframe .of { padding-left: 2px; }
.flowsframe .gray { padding-top: 4px; }
.of i:first-child { width: 29px; }
.of i:last-child { width: 35px; border-color: #9c9cc8; }
.flows { padding: 4px; display: flex; flex-direction: column; min-width: 0; }
.offilter { height: 23px; flex: none; display: flex; align-items: center; padding: 0 4px 0 8px; }
.offilter label { width: 58px; }
.offilter .in { width: 137px; }
.offilter .cookie { width: 80px; padding-left: 16px; }
.offilter .btn { margin-left: auto; }
.flowbody { flex: 1; min-height: 0; display: flex; margin-top: 4px; gap: 3px; }
.tablewrap { flex: 1; min-width: 0; display: flex; border: 1px solid #333; background: #d2d2dc; }
.ftable { flex: 1; overflow: hidden; color: #55555c; }
.fr { display: grid; grid-template-columns: 15px 27px 249px 1fr; height: 21.5px; }
.fr > span { border-bottom: 1px solid #b4b4b8; padding-left: 1px; line-height: 21px; overflow: hidden; letter-spacing: -.16px; }
.fr > span:nth-child(4) { padding-left: 2px; }
.fr > span:first-child { background: #aaaae6; border-right: 1px solid #555560; border-bottom: 1px solid #707084; font-weight: bold; color: #50508c; padding-left: 2px; letter-spacing: -.5px; }
.fr > span:nth-child(2), .fr > span:nth-child(3) { border-right: 1px solid #cacad3; }
.fr.hd { height: 14px; }
.fr.hd > span { line-height: 13px; height: 14px; background: #aaaae6; color: #54547c; border-bottom: 1px solid #666; border-right: 1px solid #555; text-align: center; padding-left: 0; font-weight: 600; letter-spacing: -.2px; }
.fr.hd .corner { background: #fff; }
.scroll { width: 12px; display: flex; flex-direction: column; background: #c8c8ce; border-left: 1px solid #777; }
.scroll q { height: 13px; background: #d2d2d2; display: flex; align-items: center; justify-content: center; }
.scroll q svg { width: 7px; height: 7px; }
.thumb { height: 196px; background: linear-gradient(90deg, #c8c8c8, #a6a6a6); border: 1px solid #777; }
.scroll .end { margin-top: auto; }
.tools3 { width: 28px; display: flex; flex-direction: column; align-items: center; padding-top: 5px; gap: 3px; }
.tools3 .g1 { margin-top: 39px; }

/* QOS page */
.qosframe { display: flex; flex-direction: column; padding: 3px 3px 4px 2px; }
.queues { height: 174px; }
.qos { flex: 1; }
.queues, .qos { display: flex; flex-direction: column; padding: 3px 4px 4px; }
.queues h4, .qos h4 { padding-left: 5px; height: 17px; line-height: 16px; }
.qin { flex: 1; min-height: 0; display: flex; padding: 4px 3px; gap: 3px; }
.rule { height: 1px; margin: 4px 0; background: #d2d2d8; }
.qtable { flex: 1; border: 1px solid #222; background: #d2d2dc; color: #65656c; }
.qr { display: grid; grid-template-columns: 199px 43px 52px 28px 38px 24px; height: 21.5px; width: 384px; }
.qr > span { line-height: 21px; padding-left: 1px; border-bottom: 1px solid #c0c0c6; border-right: 1px solid #cacad3; letter-spacing: -.25px; overflow: hidden; }
.qr > span:nth-child(3) { text-align: right; padding-right: 4px; }
.qr.selrow > span { background: #4a90d9; color: #fff; border-right-color: #4488ce; }
.qr.hd { height: 14px; }
.qr.hd > span { line-height: 13px; background: #aaaae6; color: #54547c; border-bottom: 1px solid #666; border-right: 1px solid #555; text-align: center; padding: 0; font-weight: 500; letter-spacing: -.15px; }
.tools4 { width: 24px; display: flex; flex-direction: column; align-items: center; padding-top: 2px; gap: 3px; }
.tools4 .far { margin-top: 26px; }
.tree { flex: 1; border: 1px solid #62a0dc; background: #d2d2dc; color: #404048; letter-spacing: -.22px; }
.tree p { height: 16px; line-height: 16px; }
.tree svg { width: 7px; height: 7px; margin-right: 3px; color: #111; }
.cur { padding-left: 2px; outline: 1px dashed #aaaab2; outline-offset: -1px; }
.t1 { padding-left: 12px; }
.kids { margin-left: 15px; border-left: 1px solid #a4a4aa; }
.t2 { margin-left: 9px; padding-left: 7px; border-left: 1px solid #a4a4aa; }
.t2.last { background: linear-gradient(#a4a4aa, #a4a4aa) 0 8px / 5px 1px no-repeat, linear-gradient(#a4a4aa, #a4a4aa) 0 0 / 1px 8px no-repeat; border-left-color: transparent; background-origin: border-box; }
.kids .t3 { padding-left: 6px; background: linear-gradient(#a4a4aa, #a4a4aa) 0 8px / 4px 1px no-repeat; }
.tree > .t3 { margin-left: 15px; padding-left: 7px; background: linear-gradient(#a4a4aa, #a4a4aa) 0 8px / 5px 1px no-repeat, linear-gradient(#a4a4aa, #a4a4aa) 0 0 / 1px 8px no-repeat; }
.tools5 { width: 43px; display: grid; grid-template-columns: 17px 17px; column-gap: 2px; grid-auto-rows: 15.4px; align-items: center; align-content: start; justify-content: center; padding-top: 1px; }

/* interface page */
.ifpage { padding: 4px 4px; display: flex; flex-direction: column; gap: 4px; }
.speed { height: 52px; flex: none; display: flex; justify-content: space-between; padding: 2px 2px 3px 6px; }
.sgrid { display: grid; grid-template-columns: 61px 81px 67px 79px; grid-template-rows: 15px 17px 14px; align-items: center; }
.sgrid .full { padding-left: 5px; }
.speed .side { width: 25px; gap: 4px; }
.stats { height: 193px; flex: none; display: flex; gap: 2px; padding: 2px; }
.statcol { flex: 1; display: flex; flex-direction: column; }
.stathead { height: 16px; display: flex; align-items: center; padding-left: 4px; gap: 8px; }
.report { flex: 1; font: inherit; line-height: 13px; background: #c8c8c8; border: 1px solid #b0b0b4; padding: 2px 5px; color: #44444a; letter-spacing: -.22px; }
.report .k { padding-left: 11px; }
.v1 { padding-left: 13px; } .v2 { padding-left: 16px; } .v3 { padding-left: 11px; }
.states { width: 108px; display: grid; grid-template-columns: 61px 19px 17px; grid-auto-rows: 15.5px; align-items: center; align-content: start; padding: 1px 2px 0 7px; }
.led { display: block; width: 15px; height: 13px; background: #96f096; border-right: 1px solid #6464c8; border-bottom: 1px solid #6464c8; }
.ids { flex: 1; display: flex; flex-direction: column; padding: 1px 6px; }
.ids label { height: 16px; line-height: 16px; }

/* network plot page */
.plotframe { display: flex; flex-direction: column; padding: 4px 3px 0; }
.plot { height: 365px; flex: none; display: flex; gap: 4px; padding: 4px; }
.plotcol { flex: 1; min-width: 0; display: flex; flex-direction: column; gap: 4px; }
.pfilter { height: 36px; flex: none; padding: 2px 1px 0 6px; }
.pfilter > div { display: flex; align-items: center; height: 16px; }
.pfilter label { width: 47px; flex: none; }
.pfilter .in { flex: 1; letter-spacing: -.43px; }
.pfilter .rank { width: 60px; padding-left: 14px; }
.pfilter .node { width: 63px; padding-left: 14px; }
.canvas { flex: 1; background: #d2d2dc; border: 1px solid #b8b8bc; padding-left: 2px; min-height: 0; }
.graph { display: block; width: 587px; height: 232px; background: #fff; stroke: none; }
.cluster rect { fill: #fff; stroke: #333; stroke-width: 3; }
.veth rect { fill: #ccff70; stroke: #222; stroke-width: 3; }
.bridge { fill: #c0c0c0; stroke: #333; stroke-width: 3; }
.edge { fill: none; stroke: #111; stroke-width: 2.6; }
.tip { fill: #000; stroke: #000; stroke-width: 2; }
.gt { font: 31px "Liberation Serif", serif; fill: #111; text-anchor: middle; letter-spacing: 0; }
.tools6 { width: 24px; display: flex; flex-direction: column; align-items: center; gap: 1px; padding: 2px 0 1px; }
.tools6 .low { margin-top: auto; }
.saved { padding: 3px 0 0 5px; letter-spacing: -.15px; }
```
